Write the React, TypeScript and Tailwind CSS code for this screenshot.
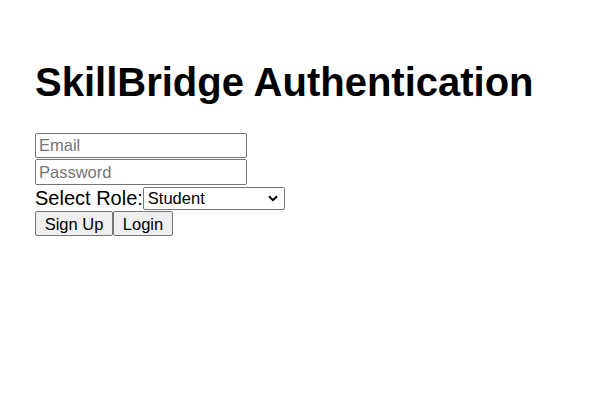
import React, { useState } from "react";

export default function App() {
  const [role, setRole] = useState("student");

  return (
    <div className="min-h-screen bg-white pl-[35px] pt-[59px] font-['Liberation_Sans',Arial,sans-serif] text-black">
      <h1 className="text-[40px] font-bold leading-[46px]">SkillBridge Authentication</h1>

      <div className="mt-[28px] flex flex-col items-start">
        <input
          type="email"
          placeholder="Email"
          className="h-[25px] w-[212px] rounded-[2px] border border-[#767676] px-[3px] text-[16.5px] placeholder:text-[#757575] outline-none"
        />
        <input
          type="password"
          placeholder="Password"
          className="mt-[1px] h-[26px] w-[212px] rounded-[2px] border border-[#767676] px-[3px] text-[16.5px] placeholder:text-[#757575] outline-none"
        />
        <div className="flex h-[26px] items-center">
          <label className="text-[20px] leading-[23px]">Select Role:</label>
          <div className="relative">
            <select
              value={role}
              onChange={(e) => setRole(e.target.value)}
              className="block h-[23px] w-[142px] appearance-none rounded-[2px] border border-[#767676] bg-white pl-[4px] text-[16.5px] leading-[19px] outline-none"
            >
              <option value="student">Student</option>
              <option value="mentor">Mentor</option>
            </select>
            <svg
              className="pointer-events-none absolute right-[7px] top-[8px]"
              width="10"
              height="7"
              viewBox="0 0 10 7"
              fill="none"
            >
              <path d="M1 1.2 L5 5.2 L9 1.2" stroke="#000" strokeWidth="2" />
            </svg>
          </div>
        </div>
        <div className="flex">
          <button className="h-[25px] w-[78px] rounded-[2px] border border-[#767676] bg-[#efefef] text-[16.5px]">
            Sign Up
          </button>
          <button className="h-[25px] w-[60px] rounded-[2px] border border-[#767676] bg-[#efefef] text-[16.5px]">
            Login
          </button>
        </div>
      </div>
    </div>
  );
}
